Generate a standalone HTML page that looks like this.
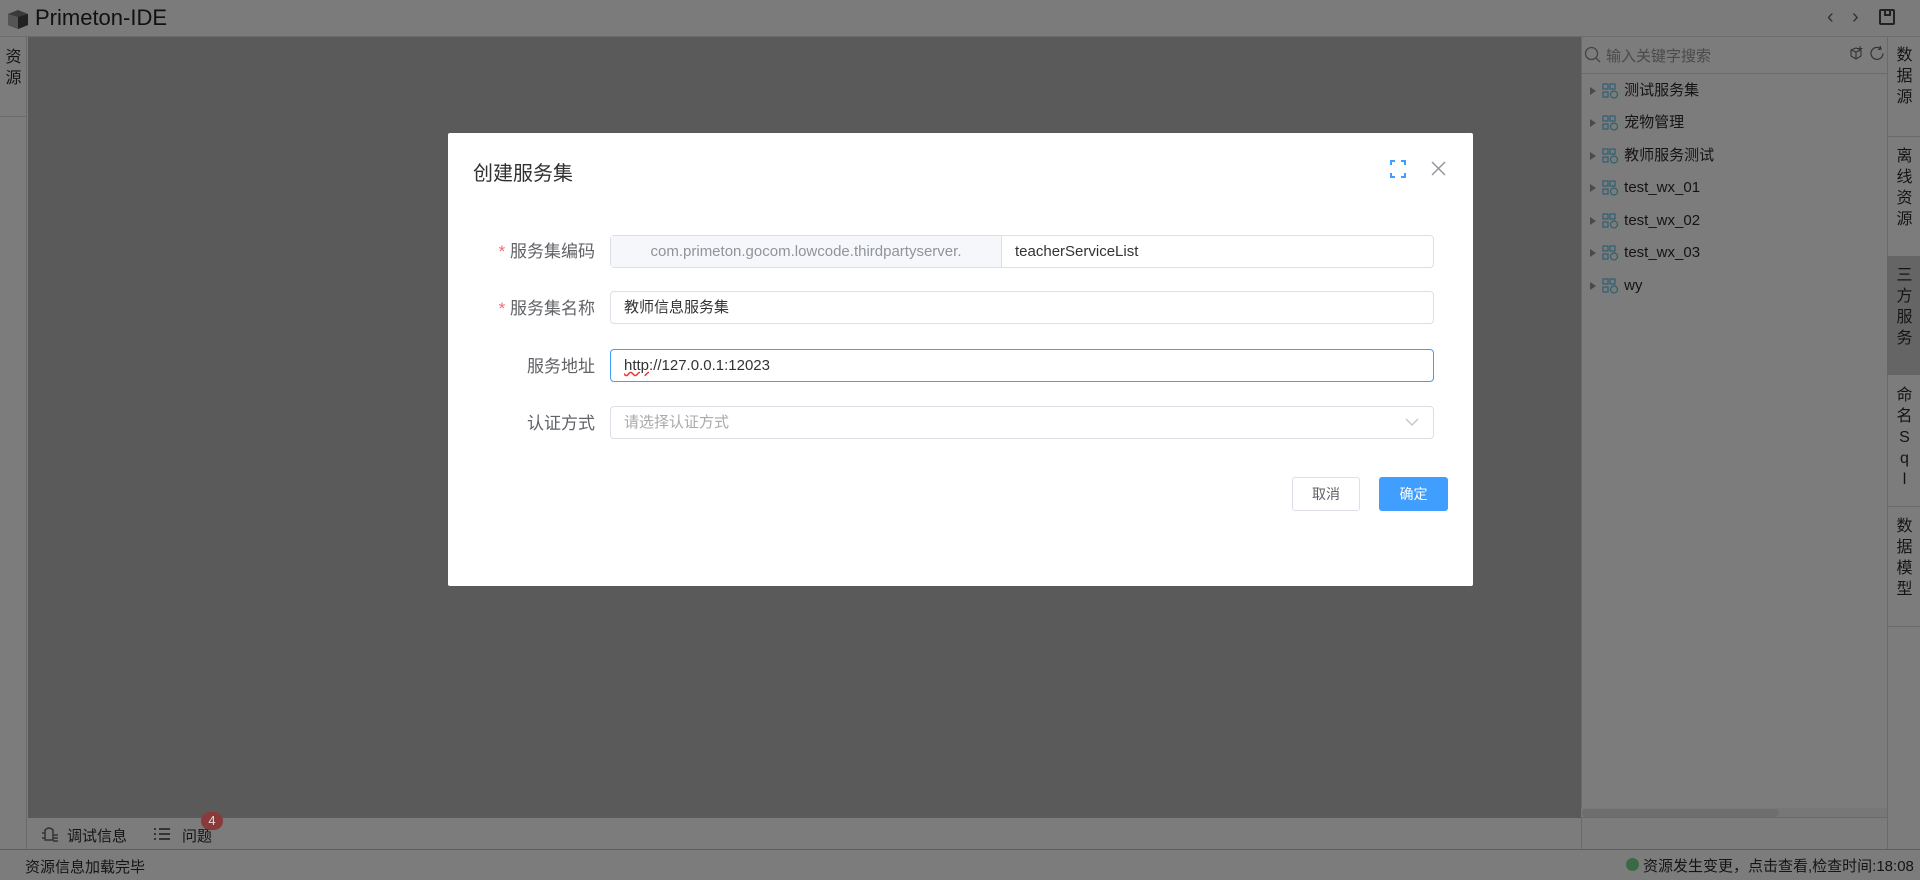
<!DOCTYPE html>
<html><head><meta charset="utf-8"><style>
*{box-sizing:border-box;margin:0;padding:0}
body{width:1920px;height:880px;overflow:hidden;background:#7c7c7c;font-family:"Liberation Sans","Noto Sans CJK SC",sans-serif;color:#141414;position:relative}
.abs{position:absolute}
.vt{font-size:16px;line-height:21px;text-align:center;width:33px}
.tree div{position:absolute;left:0;height:32px;line-height:32px;font-size:15px;display:flex;align-items:center}
.tri{width:0;height:0;border-left:6px solid #4a4a4a;border-top:4px solid transparent;border-bottom:4px solid transparent;margin:0 6px 0 9px}
.lbl{position:absolute;right:1325px;font-size:17px;color:#606266;text-align:right}
.inp{position:absolute;left:610px;width:824px;height:33px;border:1px solid #dcdfe6;border-radius:4px;font-size:15px;line-height:31px;padding-left:13px;color:#333;background:#fff}
</style></head><body>
<div class="abs" style="left:0;top:0;width:1920px;height:37px;background:#7b7b7b;border-bottom:1px solid #6c6c6c"></div>
<svg class="abs" style="left:6px;top:8px" width="24" height="22" viewBox="0 0 24 22"><path d="M2 6 L12 2 L22 6 L22 17 L12 21 L2 17Z" fill="#3a3a3a"/><path d="M12 9 L22 6 L22 17 L12 21Z" fill="#222"/><path d="M2 6 L12 9 L12 21 L2 17Z" fill="#555"/></svg>
<div class="abs" style="left:35px;top:5px;font-size:22px;color:#111">Primeton-IDE</div>
<div class="abs" style="left:1827px;top:6px;font-size:20px;color:#333">‹</div>
<div class="abs" style="left:1852px;top:6px;font-size:20px;color:#333">›</div>
<div class="abs" style="left:1879px;top:9px;width:16px;height:16px;border:2px solid #222;border-radius:2px"><div style="position:absolute;left:3px;top:-1px;width:7px;height:6px;border:2px solid #222;border-top:none"></div></div>
<div class="abs" style="left:0;top:37px;width:27px;height:813px;background:#7c7c7c;border-right:1px solid #6a6a6a"></div>
<div class="abs vt" style="left:-3px;top:47px">资<br>源</div>
<div class="abs" style="left:0;top:116px;width:27px;height:1px;background:#6a6a6a"></div>
<div class="abs" style="left:28px;top:37px;width:1553px;height:781px;background:#5a5a5a"></div>
<div class="abs" style="left:1581px;top:37px;width:306px;height:813px;background:#7c7c7c;border-left:1px solid #6a6a6a"></div>
<div class="abs" style="left:1581px;top:73px;width:306px;height:1px;background:#6a6a6a"></div>
<svg class="abs" style="left:1584px;top:46px" width="18" height="18" viewBox="0 0 18 18"><circle cx="7.5" cy="7.5" r="6" fill="none" stroke="#444" stroke-width="1.3"/><path d="M12 12 L16 16" stroke="#444" stroke-width="1.3"/></svg>
<div class="abs" style="left:1606px;top:45px;font-size:15px;color:#4a4a4a">输入关键字搜索</div>
<svg class="abs" style="left:1849px;top:45px" width="16" height="16" viewBox="0 0 16 16"><path d="M2 5 L7 3 L12 5 L12 11 L7 14 L2 11Z M2 5 L7 7 L12 5 M7 7 L7 14" fill="none" stroke="#333" stroke-width="1.1"/><path d="M11 1 V6 M8.5 3.5 H13.5" stroke="#333" stroke-width="1.1"/></svg>
<svg class="abs" style="left:1869px;top:45px" width="17" height="17" viewBox="0 0 17 17"><path d="M14 8.5 A6 6 0 1 1 11.5 3.5" fill="none" stroke="#333" stroke-width="1.2"/><path d="M11 1 L12 4 L9 4.5" fill="none" stroke="#333" stroke-width="1.2"/></svg>
<div class="abs tree" style="left:1581px;top:75px;width:306px">
<div style="top:0"><span class="tri"></span><svg width="18" height="16" viewBox="0 0 18 16"><rect x="1" y="1" width="5" height="5" fill="none" stroke="#2f5f73" stroke-width="1.2"/><rect x="8" y="1" width="5" height="5" fill="none" stroke="#2f5f73" stroke-width="1.2"/><rect x="1" y="9" width="5" height="5" fill="none" stroke="#2f5f73" stroke-width="1.2"/><circle cx="12" cy="11.5" r="3.5" fill="none" stroke="#2f5f73" stroke-width="1.2"/></svg>&nbsp;测试服务集</div>
<div style="top:32px"><span class="tri"></span><svg width="18" height="16" viewBox="0 0 18 16"><rect x="1" y="1" width="5" height="5" fill="none" stroke="#2f5f73" stroke-width="1.2"/><rect x="8" y="1" width="5" height="5" fill="none" stroke="#2f5f73" stroke-width="1.2"/><rect x="1" y="9" width="5" height="5" fill="none" stroke="#2f5f73" stroke-width="1.2"/><circle cx="12" cy="11.5" r="3.5" fill="none" stroke="#2f5f73" stroke-width="1.2"/></svg>&nbsp;宠物管理</div>
<div style="top:65px"><span class="tri"></span><svg width="18" height="16" viewBox="0 0 18 16"><rect x="1" y="1" width="5" height="5" fill="none" stroke="#2f5f73" stroke-width="1.2"/><rect x="8" y="1" width="5" height="5" fill="none" stroke="#2f5f73" stroke-width="1.2"/><rect x="1" y="9" width="5" height="5" fill="none" stroke="#2f5f73" stroke-width="1.2"/><circle cx="12" cy="11.5" r="3.5" fill="none" stroke="#2f5f73" stroke-width="1.2"/></svg>&nbsp;教师服务测试</div>
<div style="top:97px"><span class="tri"></span><svg width="18" height="16" viewBox="0 0 18 16"><rect x="1" y="1" width="5" height="5" fill="none" stroke="#2f5f73" stroke-width="1.2"/><rect x="8" y="1" width="5" height="5" fill="none" stroke="#2f5f73" stroke-width="1.2"/><rect x="1" y="9" width="5" height="5" fill="none" stroke="#2f5f73" stroke-width="1.2"/><circle cx="12" cy="11.5" r="3.5" fill="none" stroke="#2f5f73" stroke-width="1.2"/></svg>&nbsp;test_wx_01</div>
<div style="top:130px"><span class="tri"></span><svg width="18" height="16" viewBox="0 0 18 16"><rect x="1" y="1" width="5" height="5" fill="none" stroke="#2f5f73" stroke-width="1.2"/><rect x="8" y="1" width="5" height="5" fill="none" stroke="#2f5f73" stroke-width="1.2"/><rect x="1" y="9" width="5" height="5" fill="none" stroke="#2f5f73" stroke-width="1.2"/><circle cx="12" cy="11.5" r="3.5" fill="none" stroke="#2f5f73" stroke-width="1.2"/></svg>&nbsp;test_wx_02</div>
<div style="top:162px"><span class="tri"></span><svg width="18" height="16" viewBox="0 0 18 16"><rect x="1" y="1" width="5" height="5" fill="none" stroke="#2f5f73" stroke-width="1.2"/><rect x="8" y="1" width="5" height="5" fill="none" stroke="#2f5f73" stroke-width="1.2"/><rect x="1" y="9" width="5" height="5" fill="none" stroke="#2f5f73" stroke-width="1.2"/><circle cx="12" cy="11.5" r="3.5" fill="none" stroke="#2f5f73" stroke-width="1.2"/></svg>&nbsp;test_wx_03</div>
<div style="top:195px"><span class="tri"></span><svg width="18" height="16" viewBox="0 0 18 16"><rect x="1" y="1" width="5" height="5" fill="none" stroke="#2f5f73" stroke-width="1.2"/><rect x="8" y="1" width="5" height="5" fill="none" stroke="#2f5f73" stroke-width="1.2"/><rect x="1" y="9" width="5" height="5" fill="none" stroke="#2f5f73" stroke-width="1.2"/><circle cx="12" cy="11.5" r="3.5" fill="none" stroke="#2f5f73" stroke-width="1.2"/></svg>&nbsp;wy</div>
</div>
<div class="abs" style="left:1581px;top:808px;width:306px;height:10px;background:#777;border-bottom:1px solid #6a6a6a"></div>
<div class="abs" style="left:1582px;top:809px;width:197px;height:8px;border-radius:4px;background:#6e6e6e"></div>
<div class="abs" style="left:1887px;top:37px;width:33px;height:813px;background:#7c7c7c;border-left:1px solid #6a6a6a"></div>
<div class="abs" style="left:1887px;top:256px;width:33px;height:119px;background:#656565"></div>
<div class="abs" style="left:1887px;top:136px;width:33px;height:1px;background:#6a6a6a"></div>
<div class="abs" style="left:1887px;top:506px;width:33px;height:1px;background:#6a6a6a"></div>
<div class="abs" style="left:1887px;top:626px;width:33px;height:1px;background:#6a6a6a"></div>
<div class="abs vt" style="left:1888px;top:45px">数<br>据<br>源</div>
<div class="abs vt" style="left:1888px;top:146px">离<br>线<br>资<br>源</div>
<div class="abs vt" style="left:1888px;top:265px">三<br>方<br>服<br>务</div>
<div class="abs vt" style="left:1888px;top:385px">命<br>名<br>S<br>q<br>l</div>
<div class="abs vt" style="left:1888px;top:516px">数<br>据<br>模<br>型</div>
<div class="abs" style="left:28px;top:818px;width:1553px;height:32px;background:#7c7c7c"></div>
<div class="abs" style="left:0;top:849px;width:1920px;height:1px;background:#5e5e5e"></div>
<svg class="abs" style="left:40px;top:826px" width="20" height="18" viewBox="0 0 20 18"><path d="M5 4 Q9 0 13 4 L13 14 L5 14 Z" fill="none" stroke="#333" stroke-width="1.5"/><path d="M2 7 H5 M2 12 H5 M13 9 H18 M13 12 H18 M13 15 H18" stroke="#333" stroke-width="1.5"/></svg>
<div class="abs" style="left:67px;top:825px;font-size:15px">调试信息</div>
<svg class="abs" style="left:153px;top:827px" width="18" height="14" viewBox="0 0 18 14"><path d="M1 2H3M6 2H17M1 7H3M6 7H17M1 12H3M6 12H17" stroke="#333" stroke-width="2"/></svg>
<div class="abs" style="left:182px;top:825px;font-size:15px">问题</div>
<div class="abs" style="left:201px;top:812px;width:22px;height:18px;border-radius:9px;background:#8a3a3a;color:#ddd;font-size:13px;line-height:18px;text-align:center">4</div>
<div class="abs" style="left:25px;top:856px;font-size:15px">资源信息加载完毕</div>
<div class="abs" style="left:1626px;top:858px;width:13px;height:13px;border-radius:50%;background:#3a6a45"></div>
<div class="abs" style="left:1643px;top:855px;font-size:15px">资源发生变更，点击查看,检查时间:18:08</div>
<div class="abs" style="left:448px;top:133px;width:1025px;height:453px;background:#fff;border-radius:2px">
<div class="abs" style="left:25px;top:24px;font-size:20px;color:#303133">创建服务集</div>
<svg class="abs" style="left:942px;top:27px" width="16" height="18" viewBox="0 0 16 18"><path d="M1 5V1H5M11 1H15V5M15 13V17H11M5 17H1V13" fill="none" stroke="#409eff" stroke-width="2"/></svg>
<svg class="abs" style="left:983px;top:28px" width="15" height="15" viewBox="0 0 15 15"><path d="M1 1L14 14M14 1L1 14" stroke="#909399" stroke-width="1.4"/></svg>
</div>
<div class="lbl" style="top:237px"><span style="color:#f56c6c">* </span>服务集编码</div>
<div class="lbl" style="top:294px"><span style="color:#f56c6c">* </span>服务集名称</div>
<div class="lbl" style="top:352px">服务地址</div>
<div class="lbl" style="top:409px">认证方式</div>
<div class="inp" style="top:235px;padding:0">
<div style="position:absolute;left:0;top:0;width:391px;height:31px;background:#f5f7fa;border-right:1px solid #dcdfe6;color:#909399;text-align:center;font-size:15px">com.primeton.gocom.lowcode.thirdpartyserver.</div>
<div style="position:absolute;left:404px;top:0">teacherServiceList</div></div>
<div class="inp" style="top:291px">教师信息服务集</div>
<div class="inp" style="top:349px;border-color:#409eff"><span style="text-decoration:underline wavy #e33">http</span>://127.0.0.1:12023</div>
<div class="inp" style="top:406px;color:#aaa">请选择认证方式<svg style="position:absolute;right:14px;top:11px" width="14" height="9" viewBox="0 0 14 9"><path d="M1 1L7 7L13 1" fill="none" stroke="#c0c4cc" stroke-width="1.3"/></svg></div>
<div class="abs" style="left:1292px;top:477px;width:68px;height:34px;border:1px solid #dcdfe6;border-radius:3px;font-size:14px;line-height:32px;text-align:center;color:#606266;background:#fff">取消</div>
<div class="abs" style="left:1379px;top:477px;width:69px;height:34px;border-radius:3px;font-size:14px;line-height:34px;text-align:center;color:#fff;background:#409eff">确定</div>
</body></html>
